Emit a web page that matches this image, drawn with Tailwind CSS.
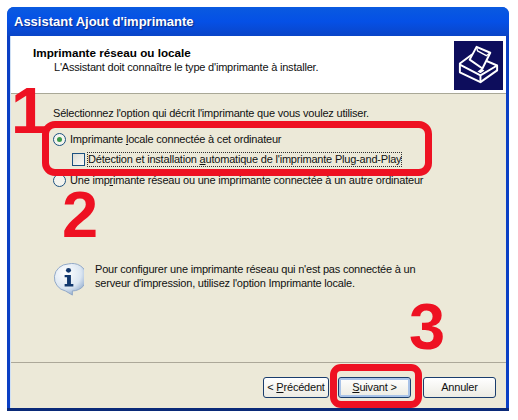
<!DOCTYPE html>
<html lang="fr">
<head>
  <meta charset="UTF-8" />
  <title>Assistant Ajout d'imprimante</title>
  <script src="https://cdn.jsdelivr.net/npm/@tailwindcss/browser@4"></script>
</head>
<body class="bg-white w-[518px] h-[420px] overflow-hidden relative font-['Liberation_Sans',sans-serif] text-[11px] tracking-[-0.2px] text-[#111]">
  <div class="ml-[7px] mt-[7px] w-[502px] h-[404px] flex flex-col rounded-t-[7px] overflow-hidden bg-[#0a3fc4] border-b-[3px] border-[#0a2a78]">
    <!-- titlebar -->
    <div class="h-[29px] shrink-0 flex items-center pl-[7px] text-white font-bold text-[13px] tracking-normal [text-shadow:1px_1px_1px_#0a2a8a] bg-gradient-to-b from-[#0a5ae0] via-[#0550e6] to-[#0a45c8]">Assistant Ajout d'imprimante</div>

    <div class="flex-1 flex flex-col mx-[3px] min-h-0 bg-[#ece9d8] border-l border-[#cfe0f5]">
      <!-- header -->
      <div class="h-[58px] shrink-0 bg-white border-b border-[#a9a897] flex justify-between pl-[22px] pr-[3px]">
        <div class="pt-[9px]">
          <div class="font-bold text-[11.7px] tracking-normal leading-[15px] text-black">Imprimante réseau ou locale</div>
          <div class="pl-[21px] leading-[14px]">L'Assistant doit connaître le type d'imprimante à installer.</div>
        </div>
        <div class="w-[49px] h-[49px] mt-[5px] bg-[#0d0d5c]">
          <svg width="49" height="49" viewBox="0 0 50 50" fill="none" stroke="white" stroke-width="2" stroke-linejoin="round">
            <path d="M6 23 L18 14 L44 25 L44 30 L27 42 L6 32 Z" />
            <path d="M6 24 L27 35 L44 25 M27 35 L27 42" />
            <path d="M16 19 L23 6 L37 12 L29 28 Z" fill="#0d0d5c" />
            <path d="M23 6 L24 10 L33 15 L37 12" stroke-width="1.4" />
            <path d="M24 31 L28 28 L31 30 L27 33 Z" fill="white" stroke="none" />
          </svg>
        </div>
      </div>

      <!-- content -->
      <div class="flex-1 flex flex-col pl-[42px] pt-[12px] min-h-0">
        <div class="leading-[14px]">Sélectionnez l'option qui décrit l'imprimante que vous voulez utiliser.</div>

        <div class="flex items-center h-[14px] mt-[12px]">
          <span class="w-[13px] h-[13px] rounded-full border border-[#1c5180] bg-[#f4f4ee] flex items-center justify-center">
            <span class="w-[5px] h-[5px] rounded-full bg-[#3a9a4a]"></span>
          </span>
          <span class="ml-[4px]">Imprimante <span class="underline">l</span>ocale connectée à cet ordinateur</span>
        </div>

        <div class="flex items-center h-[15px] mt-[6px] ml-[19px]">
          <span class="w-[13px] h-[13px] border border-[#1c5180] bg-gradient-to-br from-[#dcdcd4] to-[#fbfbf8]"></span>
          <span class="ml-[2px] border border-dotted border-[#333] leading-[13px]">Détection et installation <span class="underline">a</span>utomatique de l'imprimante Plug-and-Play</span>
        </div>

        <div class="flex items-center h-[14px] mt-[6px]">
          <span class="w-[13px] h-[13px] rounded-full border border-[#1c5180] bg-[#f4f4ee]"></span>
          <span class="ml-[4px]">Une imp<span class="underline">r</span>imante réseau ou une imprimante connectée à un autre ordinateur</span>
        </div>

        <div class="flex mt-[75px] items-start">
          <svg width="31" height="33" viewBox="0 0 32 36" preserveAspectRatio="none" class="mt-[1px]">
            <defs>
              <radialGradient id="bulle" cx="0.35" cy="0.3" r="0.8">
                <stop offset="0" stop-color="#ffffff" />
                <stop offset="0.6" stop-color="#dbe6f2" />
                <stop offset="1" stop-color="#7f9dc4" />
              </radialGradient>
            </defs>
            <path d="M16 1 A15 15 0 1 1 20 30.5 L20 35 L13 30.6 A15 15 0 0 1 16 1 Z" fill="url(#bulle)" stroke="#8ea6c6" />
            <circle cx="16" cy="8" r="2.6" fill="#12386e" />
            <path d="M12 13 L18.5 13 L18.5 23 L21 23 L21 25.5 L12 25.5 L12 23 L14.5 23 L14.5 15.5 L12 15.5 Z" fill="#12386e" />
          </svg>
          <div class="ml-[11px] leading-[14px]">
            <div>Pour configurer une imprimante réseau qui n'est pas connectée à un</div>
            <div>serveur d'impression, utilisez l'option Imprimante locale.</div>
          </div>
        </div>
      </div>

      <!-- buttons -->
      <div class="h-[46px] shrink-0 border-t border-[#aca899] flex items-start pt-[14px] pl-[252px]">
        <button class="w-[66px] h-[21px] rounded-[3px] border border-[#1a3d6d] bg-gradient-to-b from-white to-[#ecebe3] leading-none whitespace-nowrap">&lt; <span class="underline">P</span>récédent</button>
        <button class="ml-[9px] w-[73px] h-[21px] rounded-[3px] border border-[#1a3d6d] bg-gradient-to-b from-white to-[#ecebe3] shadow-[inset_0_0_0_2px_#a9c3e8] leading-none"><span class="underline">S</span>uivant &gt;</button>
        <button class="ml-[12px] w-[73px] h-[21px] rounded-[3px] border border-[#1a3d6d] bg-gradient-to-b from-white to-[#ecebe3] leading-none">Annuler</button>
      </div>
    </div>
  </div>

  <!-- annotations rouges par-dessus la capture -->
  <div class="absolute left-[42px] top-[121px] w-[390px] h-[55px] border-[7px] border-[#ee1122] rounded-[13px]"></div>
  <div class="absolute left-[330px] top-[364px] w-[92px] h-[44px] border-[7px] border-[#ee1122] rounded-[11px]"></div>
  <div class="absolute left-[11px] top-[87px] text-[#ee1122] font-bold text-[65px] tracking-normal leading-[48px]">1</div>
  <div class="absolute left-[62px] top-[191px] text-[#ee1122] font-bold text-[65px] tracking-normal leading-[48px]">2</div>
  <div class="absolute left-[409px] top-[303px] text-[#ee1122] font-bold text-[65px] tracking-normal leading-[48px]">3</div>
</body>
</html>
